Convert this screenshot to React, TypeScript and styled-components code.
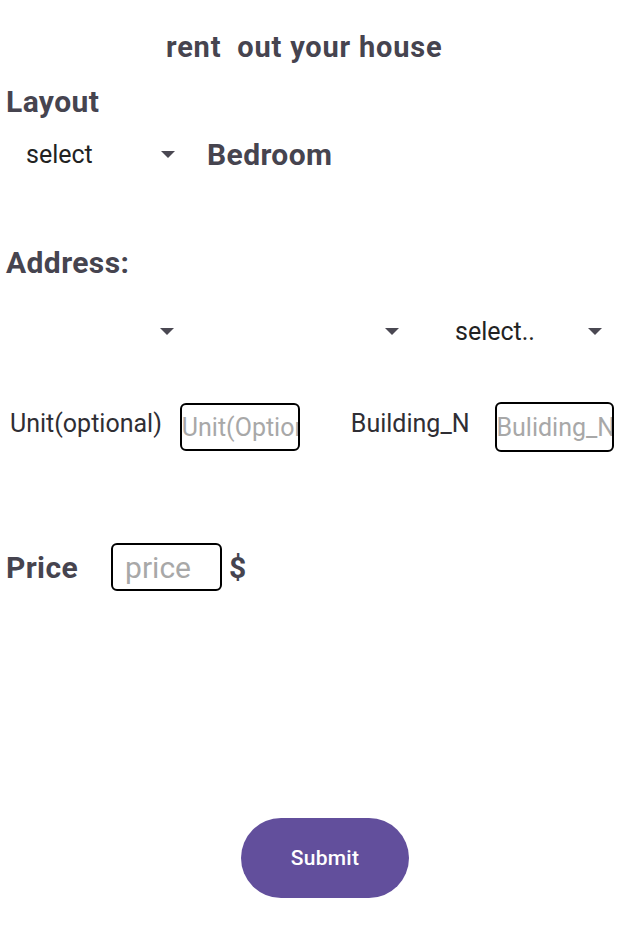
import React from "react";
import styled, { createGlobalStyle } from "styled-components";

const Global = createGlobalStyle`
  html, body { margin: 0; padding: 0; background: #ffffff; }
  body { font-family: Roboto, "Noto Sans", sans-serif; }
`;

const Page = styled.div`
  width: 636px;
  height: 948px;
  display: flex;
  flex-direction: column;
  box-sizing: border-box;
  padding-top: 28px;
`;

const Title = styled.h1`
  margin: 0 0 0 166px;
  font-size: 29px;
  line-height: 38px;
  letter-spacing: 0.8px;
  font-weight: 700;
  color: #46444f;
  white-space: pre;
`;

const Heading = styled.h2<{ $top: number }>`
  margin: ${(p) => p.$top}px 0 0 6px;
  font-size: 30px;
  line-height: 36px;
  letter-spacing: 0.4px;
  font-weight: 700;
  color: #46444f;
`;

const Row = styled.div<{ $top: number; $height: number }>`
  display: flex;
  align-items: center;
  margin-top: ${(p) => p.$top}px;
  height: ${(p) => p.$height}px;
`;

const Select = styled.div<{ $left: number; $width: number }>`
  display: flex;
  align-items: center;
  justify-content: space-between;
  margin-left: ${(p) => p.$left}px;
  width: ${(p) => p.$width}px;
  font-size: 25px;
  color: #222222;
`;

const Arrow = styled.span`
  width: 0;
  height: 0;
  border-left: 7.5px solid transparent;
  border-right: 7.5px solid transparent;
  border-top: 7px solid #4a4852;
`;

const InlineBold = styled.span<{ $left: number }>`
  margin-left: ${(p) => p.$left}px;
  font-size: 30px;
  letter-spacing: 0.4px;
  font-weight: 700;
  color: #46444f;
`;

const Label = styled.span<{ $left: number }>`
  margin: 0 0 7px ${(p) => p.$left}px;
  font-size: 25px;
  color: #2f2e34;
`;

const Input = styled.input<{ $left: number; $width: number; $height: number }>`
  margin-left: ${(p) => p.$left}px;
  width: ${(p) => p.$width}px;
  height: ${(p) => p.$height}px;
  box-sizing: border-box;
  border: 2.5px solid #000000;
  border-radius: 6px;
  padding: 0;
  font-family: Roboto, sans-serif;
  font-size: 25px;
  color: #222;
  background: #fff;
  outline: none;
  &::placeholder { color: #a8a8a8; }
`;

const PriceInput = styled(Input)`
  padding: 0 0 0 12px;
  font-size: 30px;
`;

const Dollar = styled.span`
  margin-left: 7px;
  font-size: 30px;
  font-weight: 700;
  color: #46444f;
`;

const Spacer = styled.div`
  flex: 1;
`;

const Footer = styled.div`
  display: flex;
  justify-content: center;
  padding: 0 0 50px 14px;
`;

const Submit = styled.button`
  width: 168px;
  height: 80px;
  border: none;
  border-radius: 40px;
  background: #624f9c;
  color: #ffffff;
  font-family: Roboto, sans-serif;
  font-size: 21px;
  letter-spacing: 0.3px;
  font-weight: 500;
`;

export default function App() {
  return (
    <Page>
      <Global />
      <Title>{"rent  out your house"}</Title>
      <Heading $top={18}>Layout</Heading>
      <Row $top={16} $height={36}>
        <Select $left={26} $width={149}>
          <span>select</span>
          <Arrow />
        </Select>
        <InlineBold $left={32}>Bedroom</InlineBold>
      </Row>
      <Heading $top={73}>Address:</Heading>
      <Row $top={32} $height={36}>
        <Select $left={160} $width={16}>
          <Arrow />
        </Select>
        <Select $left={209} $width={16}>
          <Arrow />
        </Select>
        <Select $left={54} $width={147}>
          <span>select..</span>
          <Arrow />
        </Select>
      </Row>
      <Row $top={53} $height={50}>
        <Label $left={10}>Unit(optional)</Label>
        <Input $left={18} $width={120} $height={48} placeholder="Unit(Optional)" />
        <Label $left={51}>Building_N</Label>
        <Input $left={25} $width={119} $height={50} placeholder="Buliding_Number" />
      </Row>
      <Row $top={91} $height={48}>
        <InlineBold $left={6}>Price</InlineBold>
        <PriceInput $left={33} $width={111} $height={48} placeholder="price" />
        <Dollar>$</Dollar>
      </Row>
      <Spacer />
      <Footer>
        <Submit>Submit</Submit>
      </Footer>
    </Page>
  );
}
